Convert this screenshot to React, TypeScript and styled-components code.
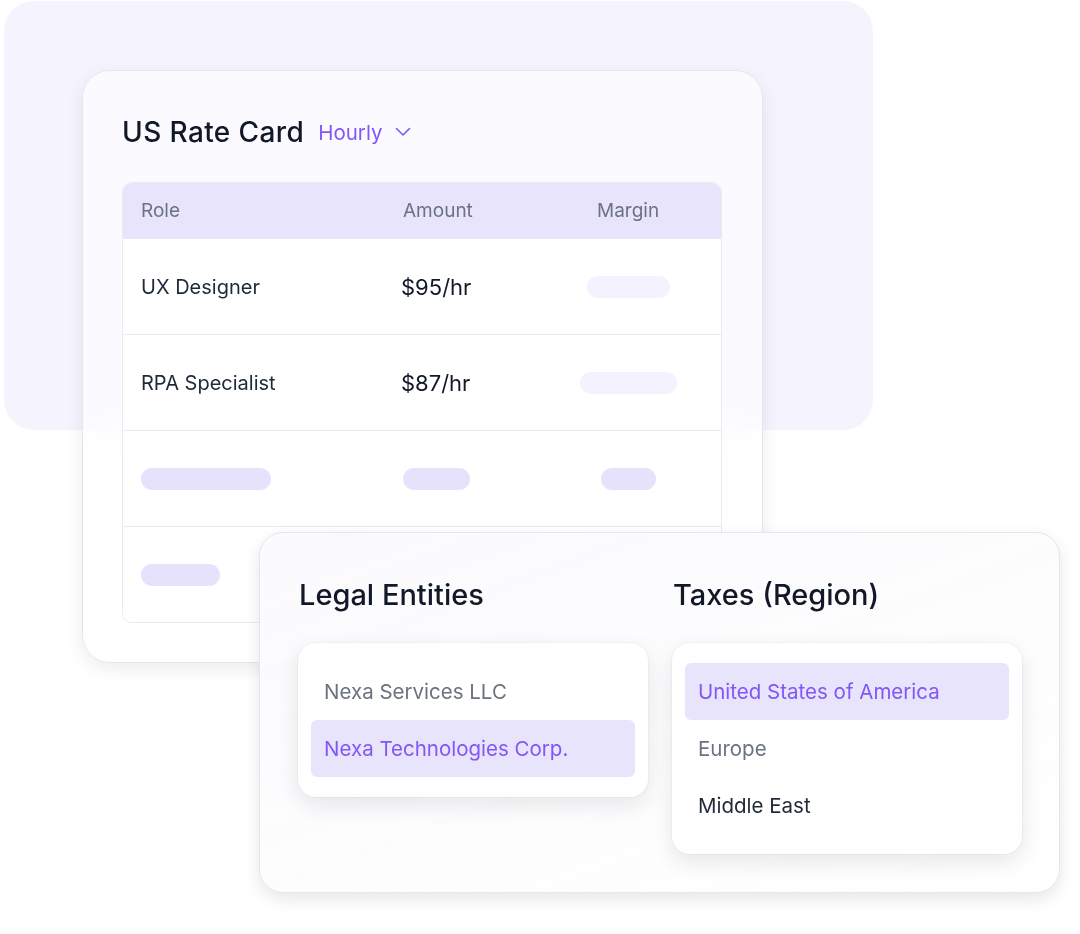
import React from "react";
import styled, { createGlobalStyle } from "styled-components";

const GlobalStyle = createGlobalStyle`
  html, body {
    margin: 0;
    padding: 0;
    background: #ffffff;
  }
  body {
    font-family: Inter, "Noto Sans", "Liberation Sans", sans-serif;
    -webkit-font-smoothing: antialiased;
  }
`;

const Canvas = styled.div`
  position: relative;
  width: 1080px;
  height: 934px;
  overflow: hidden;
  background: #ffffff;
`;

const Backdrop = styled.div`
  position: absolute;
  left: 4px;
  top: 1px;
  width: 869px;
  height: 429px;
  border-radius: 30px;
  background: #f5f3fe;
`;

const RateCard = styled.section`
  position: absolute;
  left: 82px;
  top: 70px;
  width: 681px;
  box-sizing: border-box;
  padding: 39px 40px 39px 39px;
  border: 1px solid #e6e6ea;
  border-radius: 28px;
  background: rgba(255, 255, 255, 0.55);
  backdrop-filter: blur(24px);
  box-shadow: 0 6px 18px rgba(17, 24, 39, 0.08);
`;

const TitleRow = styled.div`
  display: flex;
  align-items: center;
  height: 44px;
  margin-bottom: 28px;
`;

const Title = styled.h2`
  margin: 0;
  font-size: 28px;
  font-weight: 500;
  color: #111827;
  letter-spacing: 0.4px;
`;

const Period = styled.button`
  display: flex;
  align-items: center;
  gap: 13px;
  margin-left: 14px;
  padding: 0;
  border: none;
  background: none;
  font-family: inherit;
  font-size: 20.5px;
  color: #8257f5;
  cursor: pointer;
`;

const Table = styled.div`
  border: 1px solid #ebebef;
  border-radius: 10px;
  overflow: hidden;
  background: #ffffff;
`;

const Row = styled.div<{ $head?: boolean }>`
  display: grid;
  grid-template-columns: 262px 194px 62px;
  align-items: center;
  height: ${(p) => (p.$head ? "55px" : "95px")};
  padding-left: 18px;
  background: ${(p) => (p.$head ? "#e8e4fc" : "#ffffff")};
  & + & {
    border-top: 1px solid #ebebef;
  }
`;

const HeadCell = styled.span`
  font-size: 19px;
  color: #6b7280;
`;

const RoleCell = styled.span`
  font-size: 20px;
  color: #1f2937;
`;

const AmountCell = styled.span`
  font-size: 22px;
  color: #111827;
  margin-left: -2px;
`;

const Centered = styled.div`
  display: flex;
  justify-content: center;
`;

const Pill = styled.span<{ $w: number; $soft?: boolean }>`
  display: block;
  flex-shrink: 0;
  width: ${(p) => p.$w}px;
  height: 22px;
  border-radius: 11px;
  background: ${(p) => (p.$soft ? "#f4f2fe" : "#e6e2fc")};
`;

const EntityCard = styled.section`
  position: absolute;
  left: 259px;
  top: 532px;
  width: 801px;
  height: 361px;
  box-sizing: border-box;
  padding: 44px 39px 0 38px;
  display: grid;
  grid-template-columns: 350px 350px;
  column-gap: 24px;
  align-content: start;
  border: 1px solid #e5e5ea;
  border-radius: 24px;
  background: linear-gradient(160deg, rgba(250, 250, 253, 0.92), rgba(255, 255, 255, 0.97));
  backdrop-filter: blur(24px);
  box-shadow: 0 6px 16px rgba(17, 24, 39, 0.1);
`;

const Group = styled.div`
  display: flex;
  flex-direction: column;
  align-items: stretch;
`;

const GroupTitle = styled.h3`
  margin: 0 0 31px 1px;
  font-size: 29px;
  line-height: 35px;
  font-weight: 500;
  color: #111827;
`;

const ListBox = styled.ul`
  list-style: none;
  margin: 0;
  padding: 20px 13px;
  border-radius: 18px;
  background: #ffffff;
  box-shadow: 0 8px 22px rgba(17, 24, 39, 0.1), 0 0 0 1px rgba(17, 24, 39, 0.03);
`;

const Item = styled.li<{ $active?: boolean; $tone?: "muted" | "dark" }>`
  display: flex;
  align-items: center;
  height: 57px;
  padding-left: 13px;
  border-radius: 6px;
  font-size: 20.5px;
  background: ${(p) => (p.$active ? "#e8e4fc" : "transparent")};
  color: ${(p) =>
    p.$active ? "#8257f5" : p.$tone === "dark" ? "#1f2937" : "#6b7280"};
`;

const Chevron = () => (
  <svg width="16" height="10" viewBox="0 0 16 10" fill="none">
    <path d="M1.5 1.5L8 8l6.5-6.5" stroke="#8257f5" strokeWidth="1.6" strokeLinecap="round" strokeLinejoin="round" />
  </svg>
);

const App = () => {
  return (
    <Canvas>
      <GlobalStyle />
      <Backdrop />
      <RateCard>
        <TitleRow>
          <Title>US Rate Card</Title>
          <Period>
            Hourly
            <Chevron />
          </Period>
        </TitleRow>
        <Table>
          <Row $head>
            <HeadCell>Role</HeadCell>
            <HeadCell>Amount</HeadCell>
            <HeadCell>Margin</HeadCell>
          </Row>
          <Row>
            <RoleCell>UX Designer</RoleCell>
            <AmountCell>$95/hr</AmountCell>
            <Centered>
              <Pill $w={83} $soft />
            </Centered>
          </Row>
          <Row>
            <RoleCell>RPA Specialist</RoleCell>
            <AmountCell>$87/hr</AmountCell>
            <Centered>
              <Pill $w={97} $soft />
            </Centered>
          </Row>
          <Row>
            <Pill $w={130} />
            <Pill $w={67} />
            <Centered>
              <Pill $w={55} />
            </Centered>
          </Row>
          <Row>
            <Pill $w={79} />
            <span />
            <span />
          </Row>
        </Table>
      </RateCard>
      <EntityCard>
        <Group>
          <GroupTitle>Legal Entities</GroupTitle>
          <ListBox>
            <Item>Nexa Services LLC</Item>
            <Item $active>Nexa Technologies Corp.</Item>
          </ListBox>
        </Group>
        <Group>
          <GroupTitle>Taxes (Region)</GroupTitle>
          <ListBox>
            <Item $active>United States of America</Item>
            <Item>Europe</Item>
            <Item $tone="dark">Middle East</Item>
          </ListBox>
        </Group>
      </EntityCard>
    </Canvas>
  );
};

export default App;
